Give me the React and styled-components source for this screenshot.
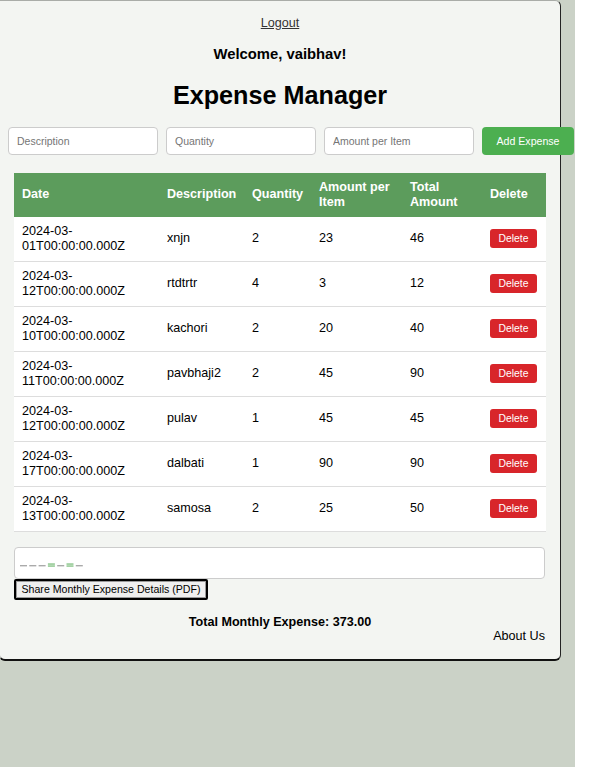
import React from 'react'
import styled, { createGlobalStyle } from 'styled-components'

const GlobalStyle = createGlobalStyle`
  html, body {
    margin: 0;
    padding: 0;
    background: #fff;
  }
  body {
    font-family: "Liberation Sans", Arial, sans-serif;
    color: #000;
  }
`

const Page = styled.div`
  width: 575px;
  min-height: 767px;
  background: #cbd2c7;
  overflow: hidden;
`

const Card = styled.div`
  box-sizing: border-box;
  width: 562px;
  margin-left: -1px;
  padding: 12px 15px 15px;
  background: #f3f5f2;
  border: 1px solid #a9aca8;
  border-right: 1px solid #222;
  border-bottom: 2px solid #111;
  border-radius: 0 6px 6px 6px;
`

const Header = styled.div`
  text-align: center;
`

const LogoutLink = styled.a`
  display: inline-block;
  font-size: 12.6px;
  line-height: 15px;
  color: #333;
  text-decoration: underline;
  cursor: pointer;
`

const Welcome = styled.h3`
  margin: 14.5px 0 0;
  font-size: 14.8px;
  line-height: 17px;
  font-weight: bold;
`

const Title = styled.h1`
  margin: 18px 0 0;
  font-size: 25.2px;
  line-height: 29px;
  font-weight: bold;
`

const Form = styled.form`
  display: flex;
  gap: 8px;
  margin: 17px 0 0 -7px;
  width: 566px;
`

const Input = styled.input`
  box-sizing: border-box;
  width: 150px;
  height: 28px;
  padding: 0 8px;
  border: 1px solid #ccc;
  border-radius: 4px;
  background: #fff;
  font-family: "Liberation Sans", Arial, sans-serif;
  font-size: 10.5px;
  &::placeholder {
    color: #757575;
  }
`

const AddButton = styled.button`
  box-sizing: border-box;
  width: 92px;
  height: 28px;
  border: none;
  border-radius: 4px;
  background: #4caf50;
  color: #fff;
  font-family: "Liberation Sans", Arial, sans-serif;
  font-size: 10.6px;
`

const Table = styled.table`
  width: 532px;
  margin: 18px 0 0 -1px;
  border-collapse: collapse;
  table-layout: fixed;
  font-size: 12.6px;
  line-height: 14.5px;
`

const Th = styled.th`
  box-sizing: border-box;
  width: ${p => p.$w}px;
  padding: 7.5px 8px;
  background: #5c9c5c;
  color: #fff;
  text-align: left;
  font-weight: bold;
`

const Td = styled.td`
  padding: 7.5px 8px;
  background: #fff;
  border-bottom: 1px solid #ddd;
  vertical-align: middle;
  word-break: break-word;
`

const DeleteButton = styled.button`
  box-sizing: border-box;
  display: block;
  width: 47px;
  height: 19px;
  padding: 0;
  border: none;
  border-radius: 3px;
  background: #d8252a;
  color: #fff;
  font-family: "Liberation Sans", Arial, sans-serif;
  font-size: 10.4px;
`

const ShareBox = styled.div`
  box-sizing: border-box;
  width: 531px;
  height: 32px;
  margin: 15px 0 0 -1px;
  padding: 0 5px 10px;
  display: flex;
  align-items: flex-end;
  background: #fff;
  border: 1px solid #ccc;
  border-radius: 4px;
`

const ShareButton = styled.button`
  box-sizing: border-box;
  display: block;
  margin: 0 0 0 -1px;
  width: 194px;
  height: 21px;
  padding: 0;
  background: #efefef;
  border: 2px solid #000;
  box-shadow: inset 0 0 0 1px #9a9a9a;
  border-radius: 2px;
  font-family: "Liberation Sans", Arial, sans-serif;
  font-size: 10.6px;
  color: #000;
`

const Total = styled.h4`
  margin: 15px 0 0;
  text-align: center;
  font-size: 12.6px;
  line-height: 14.5px;
  font-weight: bold;
`

const Footer = styled.div`
  text-align: right;
  font-size: 12.6px;
  line-height: 14.5px;
`

const expenses = [
  ['2024-03-01T00:00:00.000Z', 'xnjn', 2, 23, 46],
  ['2024-03-12T00:00:00.000Z', 'rtdtrtr', 4, 3, 12],
  ['2024-03-10T00:00:00.000Z', 'kachori', 2, 20, 40],
  ['2024-03-11T00:00:00.000Z', 'pavbhaji2', 2, 45, 90],
  ['2024-03-12T00:00:00.000Z', 'pulav', 1, 45, 45],
  ['2024-03-17T00:00:00.000Z', 'dalbati', 1, 90, 90],
  ['2024-03-13T00:00:00.000Z', 'samosa', 2, 25, 50],
]

const Dashes = () => {
  const green = [3, 5]
  return (
    <svg width="66" height="6" viewBox="0 0 66 6">
      {Array.from({ length: 7 }, (_, i) => (
        green.includes(i)
          ? <g key={i}>
              <rect x={i * 9.3} y="1.4" width="7" height="1.3" fill="#7fbf7f" />
              <rect x={i * 9.3} y="3.4" width="7" height="1.3" fill="#7fbf7f" />
            </g>
          : <rect key={i} x={i * 9.3} y="3" width="7" height="1.4" fill="#aaa" />
      ))}
    </svg>
  )
}

const App = () => {
  const total = expenses.reduce((s, e) => s + e[4], 0)

  return (
    <>
      <GlobalStyle />
      <Page>
        <Card>
          <Header>
            <LogoutLink>Logout</LogoutLink>
            <Welcome>Welcome, vaibhav!</Welcome>
            <Title>Expense Manager</Title>
          </Header>

          <Form onSubmit={e => e.preventDefault()}>
            <Input placeholder="Description" />
            <Input placeholder="Quantity" />
            <Input placeholder="Amount per Item" />
            <AddButton type="submit">Add Expense</AddButton>
          </Form>

          <Table>
            <thead>
              <tr>
                <Th $w={145}>Date</Th>
                <Th $w={85}>Description</Th>
                <Th $w={67}>Quantity</Th>
                <Th $w={91}>Amount per Item</Th>
                <Th $w={80}>Total Amount</Th>
                <Th $w={64}>Delete</Th>
              </tr>
            </thead>
            <tbody>
              {expenses.map((e, i) => (
                <tr key={i}>
                  <Td>{e[0]}</Td>
                  <Td>{e[1]}</Td>
                  <Td>{e[2]}</Td>
                  <Td>{e[3]}</Td>
                  <Td>{e[4]}</Td>
                  <Td><DeleteButton>Delete</DeleteButton></Td>
                </tr>
              ))}
            </tbody>
          </Table>

          <ShareBox><Dashes /></ShareBox>
          <ShareButton>Share Monthly Expense Details (PDF)</ShareButton>

          <Total>Total Monthly Expense: {total.toFixed(2)}</Total>
          <Footer>About Us</Footer>
        </Card>
      </Page>
    </>
  )
}

export default App
